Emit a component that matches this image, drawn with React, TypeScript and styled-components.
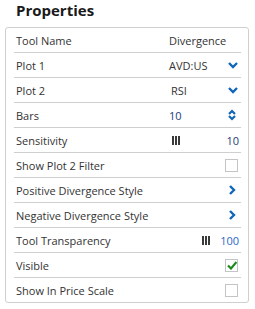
import React from "react";
import styled, { createGlobalStyle } from "styled-components";

const Global = createGlobalStyle`
  html, body { margin: 0; padding: 0; background: #fff; }
  body { font-family: "Open Sans", "Liberation Sans", sans-serif; }
`;

const Page = styled.div`
  width: 255px;
  height: 309px;
  padding: 0 6px 0 5px;
  box-sizing: border-box;
`;

const Title = styled.h1`
  margin: 0;
  padding: 0 0 0 11px;
  height: 27px;
  font-size: 15px;
  line-height: 20px;
  font-weight: 700;
  color: #1a1a1a;
`;

const Panel = styled.div`
  border: 1px solid #cfcfcf;
  border-radius: 3px;
  padding: 0 7px 0 8px;
  height: 276px;
  box-sizing: border-box;
`;

const Row = styled.div<{ $last?: boolean }>`
  display: grid;
  grid-template-columns: 1fr 70px;
  align-items: center;
  height: 25px;
  box-sizing: border-box;
  padding: 0 2px 0 2px;
  border-bottom: ${(p) => (p.$last ? "none" : "1px solid #cfcfcf")};
  font-size: 11px;
  color: #333;
`;

const Label = styled.span`
  white-space: nowrap;
`;

const Value = styled.div<{ $justify?: string }>`
  display: flex;
  align-items: center;
  justify-content: ${(p) => p.$justify || "space-between"};
  gap: 10px;
`;

const Num = styled.span<{ $color?: string }>`
  color: ${(p) => p.$color || "#1d3c78"};
`;

const Ticks = styled.span`
  display: inline-flex;
  gap: 1px;
  height: 9px;
  span {
    width: 2px;
    height: 9px;
    background: #3a3a3a;
  }
`;

const Box = styled.span`
  width: 11px;
  height: 11px;
  border: 1px solid #c4c4c4;
  background: #fff;
  display: inline-flex;
  align-items: center;
  justify-content: center;
  margin-right: 1px;
`;

const Icon = styled.svg<{ $mr?: number }>`
  display: block;
  margin-right: ${(p) => p.$mr ?? 1}px;
`;

const Chevron = ({ dir }: { dir: "down" | "right" }) =>
  dir === "down" ? (
    <Icon width="10" height="8" viewBox="0 0 10 8">
      <path d="M1 2 L5 6 L9 2" fill="none" stroke="#1166b8" strokeWidth="2.4" />
    </Icon>
  ) : (
    <Icon width="8" height="10" viewBox="0 0 8 10" $mr={3}>
      <path d="M2 1 L6 5 L2 9" fill="none" stroke="#1166b8" strokeWidth="2.4" />
    </Icon>
  );

const Spinner = () => (
  <Icon width="8" height="12" viewBox="0 0 8 12" $mr={3}>
    <path d="M1 5 L4 2 L7 5" fill="none" stroke="#1166b8" strokeWidth="2.2" />
    <path d="M1 7 L4 10 L7 7" fill="none" stroke="#1166b8" strokeWidth="2.2" />
  </Icon>
);

const TickMark = () => (
  <Ticks>
    <span />
    <span />
    <span />
  </Ticks>
);

const Check = ({ checked }: { checked?: boolean }) => (
  <Box>
    {checked && (
      <svg width="10" height="9" viewBox="0 0 10 9">
        <path d="M1 4.5 L4 7.5 L9.5 1" fill="none" stroke="#1e8a1e" strokeWidth="2.2" />
      </svg>
    )}
  </Box>
);

const Indent = styled.span<{ $pl: number }>`
  display: inline-flex;
  padding-left: ${(p) => p.$pl}px;
`;

export default function App() {
  return (
    <Page>
      <Global />
      <Title>Properties</Title>
      <Panel>
        <Row>
          <Label>Tool Name</Label>
          <Value>
            <span>Divergence</span>
          </Value>
        </Row>
        <Row>
          <Label>Plot 1</Label>
          <Value>
            <span>AVD:US</span>
            <Chevron dir="down" />
          </Value>
        </Row>
        <Row>
          <Label>Plot 2</Label>
          <Value>
            <Indent $pl={2}>RSI</Indent>
            <Chevron dir="down" />
          </Value>
        </Row>
        <Row>
          <Label>Bars</Label>
          <Value>
            <Num>10</Num>
            <Spinner />
          </Value>
        </Row>
        <Row>
          <Label>Sensitivity</Label>
          <Value>
            <Indent $pl={3}>
              <TickMark />
            </Indent>
            <Num>10</Num>
          </Value>
        </Row>
        <Row>
          <Label>Show Plot 2 Filter</Label>
          <Value $justify="flex-end">
            <Check />
          </Value>
        </Row>
        <Row>
          <Label>Positive Divergence Style</Label>
          <Value $justify="flex-end">
            <Chevron dir="right" />
          </Value>
        </Row>
        <Row>
          <Label>Negative Divergence Style</Label>
          <Value $justify="flex-end">
            <Chevron dir="right" />
          </Value>
        </Row>
        <Row>
          <Label>Tool Transparency</Label>
          <Value $justify="flex-end">
            <TickMark />
            <Num $color="#2a66c9">100</Num>
          </Value>
        </Row>
        <Row>
          <Label>Visible</Label>
          <Value $justify="flex-end">
            <Check checked />
          </Value>
        </Row>
        <Row $last>
          <Label>Show In Price Scale</Label>
          <Value $justify="flex-end">
            <Check />
          </Value>
        </Row>
      </Panel>
    </Page>
  );
}
